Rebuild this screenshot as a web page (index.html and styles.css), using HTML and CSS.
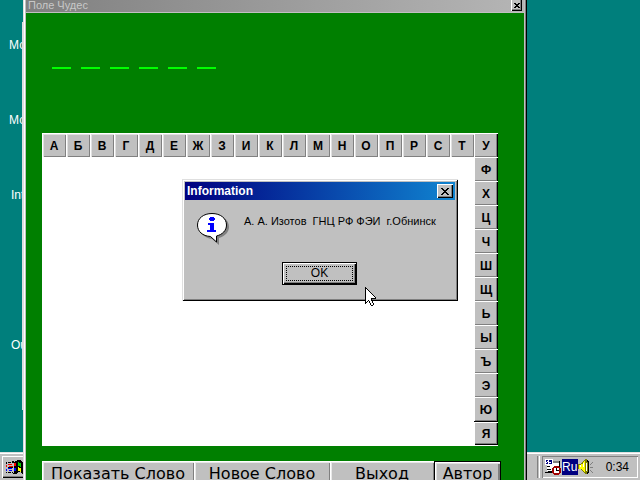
FILE: index.html
```
<!DOCTYPE html>
<html lang="ru">
<head>
<meta charset="utf-8">
<title>Поле Чудес</title>
<link rel="stylesheet" href="styles.css">
</head>
<body>
<main class="desktop">
  <span class="shortcut shortcut-1">Мо</span>
  <span class="shortcut shortcut-2">Мо</span>
  <span class="shortcut shortcut-3">Int</span>
  <span class="shortcut shortcut-4">Ou</span>
  <div class="back-window"></div>

  <footer class="taskbar">
    <button class="start" aria-label="Start">
      <svg width="18" height="14" viewBox="0 0 18 14" shape-rendering="crispEdges">
        <path d="M8 2h1v-1h2v-1h4v1h1v1h1v12h-1v-1h-1v-1h-3v1h-1v1h-4v-1h1z" fill="#000"/>
        <path d="M0 2h1v2h-1zM0 12h1v1h-1zM2 2h3v1h-3zM2 12h3v1h-3zM6 1h2v2h-2zM6 12h1v1h-1zM2 7h5v1h-5z" fill="#000"/>
        <path d="M0 5h1v2h-1zM2 4h4v1h-4zM3 6h4v1h-4zM8 3h2v3h-2z" fill="#f00"/>
        <path d="M0 9h1v2h-1zM2 8h4v1h-4zM3 10h3v1h-3zM8 8h2v3h-2z" fill="#00f"/>
        <path d="M12 2h1v1h2v4h-1v-1h-2z" fill="#0c0"/>
        <path d="M12 7h1v1h2v4h-1v-1h-2z" fill="#ff0"/>
      </svg>
    </button>
    <div class="grip"></div>
    <div class="tray">
      <svg width="16" height="16" viewBox="0 0 16 16" shape-rendering="crispEdges">
        <path d="M3 2h12v11h-12z" fill="#000"/><path d="M2 4h12v8h-12z" fill="#fff"/><path d="M8 2h6v2h-6z" fill="#808080"/>
        <path d="M0 0h8v6h-8z" fill="#fff"/>
        <path d="M1 1h2v1h-1v1h1v2h-2v-1h1v-1h-1zM4 1h3v4h-3v-1h2v-1h-2z" fill="#000080"/>
        <path d="M2 7h3v1h-3zM2 10h4v1h-4zM0 13h9v1h-9z" fill="#000"/>
        <path d="M9 7h5v1h1v1h1v5h-1v1h-1v1h-5v-1h-1v-1h-1v-5h1v-1h1z" fill="#a00000"/>
        <path d="M9 9h5v5h-5z" fill="#fff"/><path d="M11 9h1v2h2v1h-3z" fill="#000"/>
      </svg>
      <span class="lang">Ru</span>
      <svg width="16" height="16" viewBox="0 0 16 16" shape-rendering="crispEdges">
        <path d="M8 1h2v1h1v12h-1v1h-2z" fill="#000"/>
        <path d="M0 5h3v-1h1v-1h1v-1h1v-1h1v-1h2v3h1v10h-1v2h-2v-1h-1v-1h-1v-1h-1v-1h-1v-1h-3z" fill="#808000"/>
        <path d="M1 6h2v-1h2v-2h1v-1h1v11h-1v-1h-1v-1h-1v-1h-3z" fill="#ff0"/>
        <path d="M2 6h1v2h-1zM5 4h1v4h-1zM8 4h1v8h-1z" fill="#fff"/>
        <path d="M12 5h1v-1h1v-1h1v1h-1v1h-1v1h-1zM12 8h3v1h-3zM12 11h1v1h1v1h1v1h-1v-1h-1v-1h-1z" fill="#808080"/>
      </svg>
      <time class="clock">0:34</time>
    </div>
  </footer>

  <section class="game">
    <header class="game-title">
      <span>Поле Чудес</span>
      <button class="close close-small" aria-label="Закрыть"><svg width="6" height="5" viewBox="0 0 6 5" shape-rendering="crispEdges"><path d="M0 0h2v1h2v-1h2v1h-1v1h-1v1h1v1h1v1h-2v-1h-2v1h-2v-1h1v-1h1v-1h-1v-1h-1z"/></svg></button>
    </header>
    <div class="field">
      <div class="word"><i></i><i></i><i></i><i></i><i></i><i></i></div>
      <div class="board">
        <div class="row">
          <button class="key">А</button><button class="key">Б</button><button class="key">В</button><button class="key">Г</button><button class="key">Д</button><button class="key">Е</button><button class="key">Ж</button><button class="key">З</button><button class="key">И</button><button class="key">К</button><button class="key">Л</button><button class="key">М</button><button class="key">Н</button><button class="key">О</button><button class="key">П</button><button class="key">Р</button><button class="key">С</button><button class="key">Т</button><button class="key edge">У</button>
        </div>
        <div class="column">
          <button class="key edge">Ф</button><button class="key edge">Х</button><button class="key edge">Ц</button><button class="key edge">Ч</button><button class="key edge">Ш</button><button class="key edge">Щ</button><button class="key edge">Ь</button><button class="key edge">Ы</button><button class="key edge">Ъ</button><button class="key edge">Э</button><button class="key edge">Ю</button><button class="key edge last">Я</button>
        </div>
      </div>
      <div class="actions">
        <button class="action">Показать Слово</button><button class="action">Новое Слово</button><button class="action">Выход</button><button class="action current">Автор</button>
      </div>
    </div>
  </section>

  <section class="dialog" role="dialog" aria-labelledby="dialog-title">
    <header class="dialog-title">
      <span id="dialog-title">Information</span>
      <button class="close" aria-label="Close"><svg width="8" height="7" viewBox="0 0 8 7" shape-rendering="crispEdges"><path d="M0 0h2v1h1v1h2v-1h1v-1h2v1h-1v1h-1v1h-1v1h1v1h1v1h1v1h-2v-1h-1v-1h-2v1h-1v1h-2v-1h1v-1h1v-1h1v-1h-1v-1h-1v-1h-1z"/></svg></button>
    </header>
    <div class="message">
      <svg width="32" height="32" viewBox="0 0 32 32">
        <path d="M17 2c9 0 15 5 15 12 0 5-4 9-10 11v7l-7-6C7 25 3 20 3 14 3 7 9 2 17 2z" fill="#808080"/>
        <path d="M15 .5c8.500 0 14.500 4.800 14.500 11.500 0 5.500-4 9.500-10 11v6l-6-5.500C5.500 23 .5 18.500.5 12 .5 5.300 6.500.5 15 .5z" fill="#fff" stroke="#000"/>
        <path d="M13 4h4v1h1v2h-1v1h-4v-1h-1v-2h1zM11 10h6v7h2v2h-9v-2h3v-5h-2z" fill="#00f" shape-rendering="crispEdges"/>
      </svg>
      <p>А. А. Изотов&nbsp; ГНЦ РФ ФЭИ&nbsp; г.Обнинск</p>
    </div>
    <button class="ok"><span>OK</span></button>
  </section>

  <svg class="pointer" width="12" height="20" viewBox="0 0 12 20" shape-rendering="crispEdges">
    <path d="M0 0h1v1h1v1h1v1h1v1h1v1h1v1h1v1h1v1h1v1h1v1h1v2h-4v2h1v2h1v2h-1v1h-2v-1h-1v-2h-1v-2h-1v1h-1v1h-1v1h-1z"/>
    <path d="M1 2h1v1h1v1h1v1h1v1h1v1h1v1h1v1h1v1h1v1h-4v3h1v2h1v2h-2v-2h-1v-2h-1v-1h-1v1h-1v1h-1z" fill="#fff"/>
  </svg>
</main>
</body>
</html>
```
FILE: styles.css
```
* { box-sizing: border-box; }

body {
  margin: 0;
  font: 12px/14px "Liberation Sans", Arial, sans-serif;
  color: #000;
}

button {
  display: flex;
  align-items: center;
  justify-content: center;
  padding: 0;
  border: 0;
  border-radius: 0;
  background: #c0c0c0;
  color: #000;
  font: inherit;
}

svg { display: block; flex: none; }

.desktop {
  position: relative;
  height: 100vh;
  overflow: hidden;
  background: #007f7c;
}

/* Desktop shortcuts and the window behind */
.shortcut { position: absolute; color: #fff; }
.shortcut-1 { left: 9px; top: 38px; }
.shortcut-2 { left: 9px; top: 113px; }
.shortcut-3 { left: 11px; top: 188px; }
.shortcut-4 { left: 11px; top: 338px; }

.back-window {
  position: absolute;
  left: 22px;
  top: 22px;
  width: 200px;
  height: 388px;
  background: #dfdfdf;
}

/* Taskbar */
.taskbar {
  position: absolute;
  left: 0;
  right: 0;
  bottom: 0;
  height: 28px;
  display: flex;
  align-items: flex-start;
  padding: 4px 2px 0;
  background: #c0c0c0;
  box-shadow: inset 0 1px #dfdfdf, inset 0 2px #fff;
}

.start {
  width: 54px;
  height: 22px;
  justify-content: flex-start;
  padding-left: 4px;
  box-shadow: inset 1px 1px #fff, inset -1px -1px #000, inset -2px -2px #808080;
}

.grip {
  width: 3px;
  height: 22px;
  margin-left: auto;
  margin-right: 2px;
  border-left: 1px solid #808080;
  border-right: 1px solid #fff;
}

.tray {
  display: flex;
  align-items: center;
  height: 22px;
  padding: 0 9px 0 3px;
  box-shadow: inset 1px 1px #808080, inset -1px -1px #fff;
}

.lang {
  width: 16px;
  height: 16px;
  margin-left: 1px;
  background: #000080;
  color: #fff;
  line-height: 16px;
  text-align: center;
}

.clock { margin-left: 12px; }

/* Game window */
.game {
  position: absolute;
  left: 23px;
  right: 113px;
  top: -9px;
  bottom: -20px;
  display: flex;
  flex-direction: column;
  padding: 3px;
  background: #c0c0c0;
  box-shadow: inset 1px 0 #dfdfdf, inset 2px 0 #fff, inset -1px 0 #000, inset -2px 0 #808080;
}

.game-title {
  display: flex;
  flex: none;
  align-items: center;
  justify-content: space-between;
  height: 18px;
  margin-bottom: 1px;
  padding: 4px 2px 0;
  background: linear-gradient(90deg, #808080, #b5b5b5);
  color: #c8c8c8;
  font-size: 11px;
}

.close {
  width: 16px;
  height: 14px;
  box-shadow: inset 1px 1px #fff, inset -1px -1px #000, inset -2px -2px #808080;
}

.close-small { width: 11px; height: 12px; }

.field {
  flex: 1;
  padding: 54px 26px 0 16px;
  background: #007f00;
}

.word { display: flex; gap: 10px; padding-left: 10px; }
.word i { width: 19px; height: 2px; background: #0f0; }

.board {
  margin-top: 64px;
  background: #fff;
}

.row { display: flex; }
.column { display: flex; flex-direction: column; align-items: flex-end; }

.key {
  flex: none;
  width: 24px;
  height: 24px;
  padding-top: 2px;
  box-shadow: inset 1px 1px #fff, inset 2px 2px #e0e0e0, inset -1px -1px #808080;
  font-weight: bold;
}

.edge { box-shadow: inset 1px 1px #fff, inset -1px 0 #000, inset -2px -1px #808080; }
.last { box-shadow: inset 0 1px #000, inset 1px 2px #fff, inset -1px -1px #000, inset -2px -2px #808080; }
.column { padding-bottom: 1px; }

.actions {
  display: grid;
  grid-template-columns: 152fr 136fr 104fr 67fr;
  margin: 15px -3px 0 0;
}

.action {
  height: 26px;
  box-shadow: inset 1px 1px #fff, inset 2px 2px #e8e8e8, inset -1px -1px #808080;
  font-family: "DejaVu Sans", sans-serif;
  font-size: 16px;
  white-space: nowrap;
}

.current { box-shadow: inset 0 0 0 1px #000, inset 2px 2px #fff, inset 3px 3px #e0e0e0, inset -3px -3px #808080; }

/* Message box */
.dialog {
  position: absolute;
  left: 182px;
  top: 179px;
  width: 276px;
  padding: 3px 3px 16px;
  background: #c0c0c0;
  box-shadow: inset 1px 1px #dfdfdf, inset -1px -1px #000, inset 2px 2px #fff, inset -2px -2px #808080;
}

.dialog-title {
  display: flex;
  align-items: center;
  justify-content: space-between;
  height: 18px;
  padding: 0 2px;
  background: linear-gradient(90deg, #000080, #1084d0);
  color: #fff;
  font-weight: bold;
}

.message {
  display: flex;
  gap: 15px;
  padding: 13px 0 0 12px;
}

.message p {
  margin: 1px 0 0;
  font-size: 11px;
  white-space: nowrap;
}

.ok {
  width: 75px;
  height: 23px;
  margin: 17px auto 0 97px;
  padding: 4px;
  box-shadow: inset 0 0 0 1px #000, inset 2px 2px #fff, inset -2px -2px #000, inset -3px -3px #808080;
}

.ok span {
  flex: 1;
  height: 15px;
  border: 1px dotted #000;
  line-height: 13px;
}

.pointer { position: absolute; left: 365px; top: 287px; }
```
